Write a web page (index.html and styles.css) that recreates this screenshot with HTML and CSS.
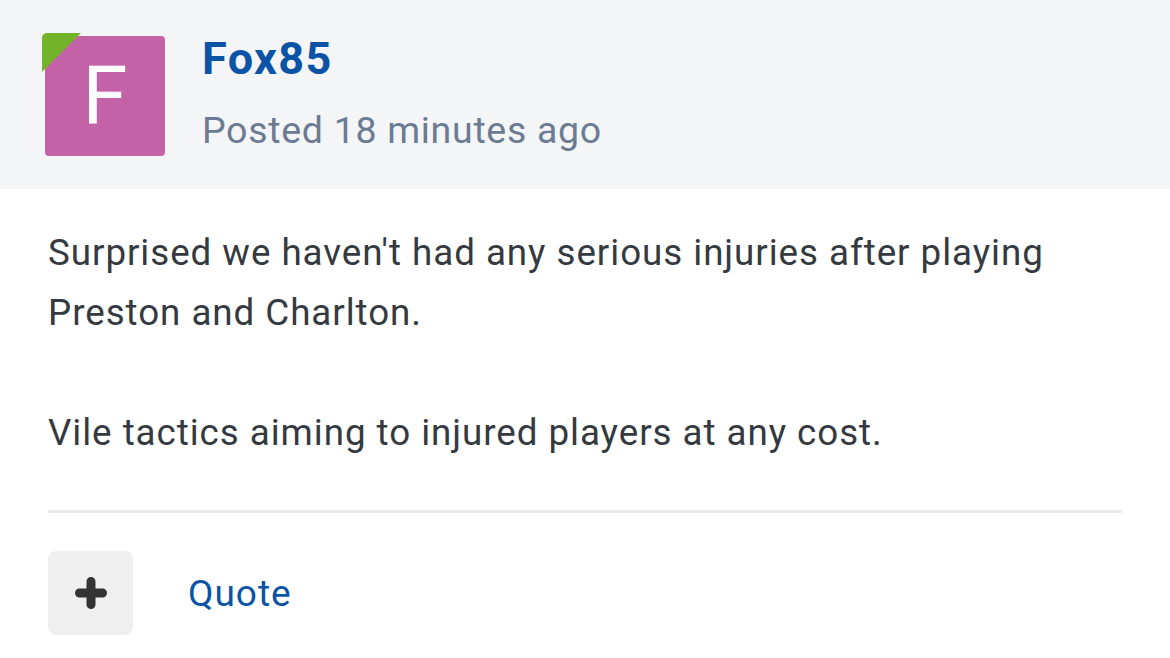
FILE: index.html
```html
<!DOCTYPE html>
<html>

<head>
  <title>Post</title>
  <link rel="stylesheet" href="styles.css">
</head>

<body>
  <div class="post">
    <div class="post-header">
      <div class="avatar">
        <span class="avatar-letter">F</span>
        <span class="online-mark"></span>
      </div>
      <div class="author">
        <a class="author-name" href="#">Fox85</a>
        <div class="post-time">Posted 18 minutes ago</div>
      </div>
    </div>

    <div class="post-body">
      <p>Surprised we haven't had any serious injuries after playing Preston and Charlton.</p>
      <p>Vile tactics aiming to injured players at any cost.</p>
    </div>

    <div class="post-footer">
      <button class="multiquote-button">
        <svg width="32" height="32" viewBox="0 0 32 32">
          <path d="M16 4.5 V27.5 M4.5 16 H27.5" stroke="#333" stroke-width="9" stroke-linecap="round" fill="none" />
        </svg>
      </button>
      <a class="quote-link" href="#">Quote</a>
    </div>
  </div>
</body>

</html>
```

FILE: styles.css
```css
body,
html {
  margin: 0;
  height: 100%;
  background-color: #fff;
}

body {
  font-family: Roboto, "Liberation Sans", sans-serif;
  color: #343a40;
}

/* 头部：头像 + 作者 */
.post-header {
  display: flex;
  align-items: flex-start;
  gap: 37px;
  height: 189px;
  box-sizing: border-box;
  padding: 36px 45px 0;
  background-color: #f4f5f7;
}

.avatar {
  position: relative;
  width: 120px;
  height: 120px;
  flex-shrink: 0;
  border-radius: 4px;
  background-color: #c462a8;
  display: flex;
  align-items: center;
  justify-content: center;
}

.avatar-letter {
  color: #fff;
  font-size: 82px;
  line-height: 1;
}

/* 左上角绿色标记 */
.online-mark {
  position: absolute;
  top: -3px;
  left: -3px;
  width: 39px;
  height: 39px;
  background-color: #74b22a;
  border-top-left-radius: 5px;
  clip-path: polygon(0 0, 100% 0, 0 100%);
}

.author {
  display: flex;
  flex-direction: column;
}

.author-name {
  color: #0b54a5;
  font-weight: bold;
  font-size: 45px;
  line-height: 46px;
  letter-spacing: 1.4px;
  text-decoration: none;
}

.post-time {
  margin-top: 26px;
  color: #6b7b93;
  font-size: 37.5px;
  line-height: 44px;
  letter-spacing: 0.7px;
}

/* 正文 */
.post-body {
  padding: 34px 48px 0;
  font-size: 36.75px;
  line-height: 60px;
  letter-spacing: 0.95px;
}

.post-body p {
  margin: 0 0 60px;
}

.post-body p:last-child {
  margin-bottom: 0;
}

/* 底部操作栏 */
.post-footer {
  display: flex;
  align-items: center;
  gap: 55px;
  margin: 47px 48px 0;
  padding-top: 38px;
  border-top: 3px solid #e9e9e9;
}

.multiquote-button {
  width: 85px;
  height: 84px;
  padding: 0;
  border: none;
  border-radius: 8px;
  background-color: #efefef;
  display: flex;
  align-items: center;
  justify-content: center;
  cursor: pointer;
}

.quote-link {
  color: #0b54a5;
  font-size: 37px;
  letter-spacing: 1px;
  text-decoration: none;
}
```
